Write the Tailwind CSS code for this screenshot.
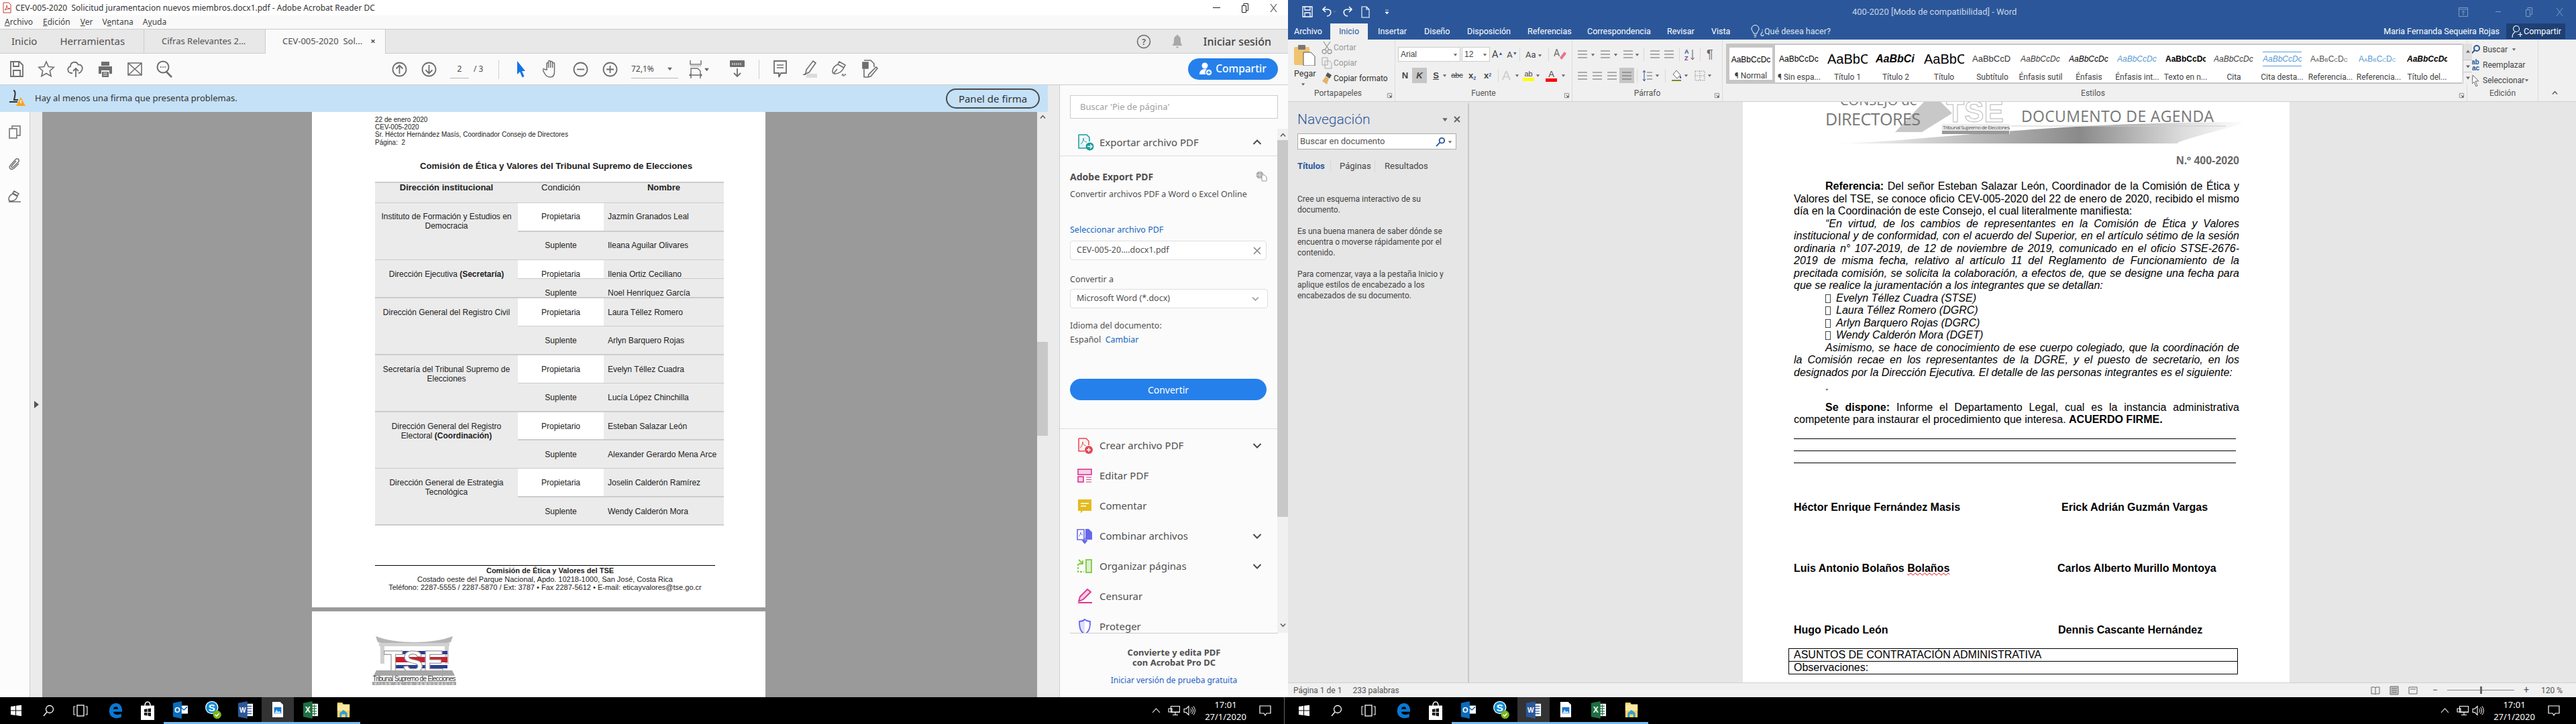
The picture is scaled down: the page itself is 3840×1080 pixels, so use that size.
<!DOCTYPE html>
<html lang="es">
<head>
<meta charset="UTF-8" />
<title>Acrobat y Word</title>
<script src="https://cdn.jsdelivr.net/npm/@tailwindcss/browser@4"></script>
</head>
<body class="w-[3840px] h-[1080px] overflow-hidden flex flex-col bg-black text-[#4b4b4b] font-['Noto_Sans',sans-serif]">

<!-- shared icons -->
<svg class="hidden">
  <symbol id="caret" viewBox="0 0 8 8"><path d="M1 2.5h6L4 6.5z" fill="#666"/></symbol>
  <symbol id="launch" viewBox="0 0 10 10"><path d="M1.5 1.5h7v7M1.5 1.5v7h7" fill="none" stroke="#888"/><path d="M4 4l3.5 3.5M7.5 5v2.5H5" stroke="#444" fill="none"/></symbol>
  <symbol id="chev-down" viewBox="0 0 14 10"><path d="M1.5 2l5.5 5.5L12.5 2" fill="none" stroke="#4b4b4b" stroke-width="2"/></symbol>
  <symbol id="win" viewBox="0 0 18 18"><path d="M1 3l7-1v6.500H1zM9 1.800L17 .8v7.700H9zM1 9.500h7V16l-7-1zM9 9.500h8v7.700l-8-1.100z" fill="#fff"/></symbol>
  <symbol id="find" viewBox="0 0 18 18"><circle cx="11" cy="7" r="5.500" fill="none" stroke="#fff" stroke-width="1.300"/><path d="M7 11l-5 6" stroke="#fff" stroke-width="1.300"/></symbol>
  <symbol id="taskview" viewBox="0 0 22 20"><rect x="6" y="2" width="10" height="16" fill="none" stroke="#fff" stroke-width="1.300"/><path d="M3.500 4H1v12h2.500M18.500 4H21v12h-2.500" fill="none" stroke="#fff" stroke-width="1.100"/></symbol>
  <symbol id="edge" viewBox="0 0 24 26"><path d="M2 14C2 6 7 1 13 1c6 0 10 5 10 12v2H8.500c.5 5 7 6 13 3v6c-8 3-19 1-19.500-10zM8.500 10.500h8c0-5-7-5-8 0z" fill="#0a78d4"/></symbol>
  <symbol id="store" viewBox="0 0 22 30"><path d="M7 8c0-8 8-8 8 0" fill="none" stroke="#fff" stroke-width="1.500"/><path d="M1 7.500h20V29H1z" fill="#fff"/><path d="M6 13l4.500-.7V17H6zM11.500 12.200l4.500-.7V17h-4.500zM6 18h4.500v4.500L6 22zM11.500 18H16v5.500l-4.500-.7z" fill="#111"/></symbol>
  <symbol id="outlook" viewBox="0 0 26 28"><path d="M12 7h13v13H12z" fill="#fff"/><path d="M13 9l5.500 5 5.500-5" fill="none" stroke="#0a6cbd" stroke-width="1.500"/><path d="M1 3l14-3v28L1 25z" fill="#0a6cbd"/><text x="8" y="18" text-anchor="middle" font-family="Liberation Sans" font-weight="700" font-size="12" fill="#fff">O</text></symbol>
  <symbol id="skype" viewBox="0 0 30 34"><circle cx="13" cy="13" r="11" fill="#fff"/><circle cx="13" cy="13" r="9.500" fill="#0a8fd8"/><text x="13" y="19" text-anchor="middle" font-family="Liberation Sans" font-weight="700" font-size="17" fill="#fff">S</text><circle cx="22" cy="25" r="7" fill="#7cb518"/><path d="M18.500 25l2.500 2.500 4-4.500" stroke="#fff" stroke-width="1.500" fill="none"/></symbol>
  <symbol id="word" viewBox="0 0 26 28"><rect x="12" y="4" width="13" height="20" fill="#fff"/><path d="M15 8h8M15 12h8M15 16h8M15 20h8" stroke="#2b579a" stroke-width="1.500"/><path d="M1 3l15-3v28L1 25z" fill="#2b579a"/><text x="8.500" y="18" text-anchor="middle" font-family="Liberation Sans" font-weight="700" font-size="11" fill="#fff">W</text></symbol>
  <symbol id="photo" viewBox="0 0 20 28"><path d="M1 1h13l5 5v21H1z" fill="#fff"/><path d="M4 10h12v11H4z" fill="#1978d4"/><path d="M4 21l4-7 3 4 2-2 3 5z" fill="#bfe0fa"/></symbol>
  <symbol id="excel" viewBox="0 0 26 28"><rect x="12" y="4" width="13" height="20" fill="#fff"/><path d="M15 8h8M15 12h8M15 16h8M15 20h8M19 5v18" stroke="#1d6f42" stroke-width="1.300"/><path d="M1 3l15-3v28L1 25z" fill="#1d6f42"/><text x="8.500" y="18.500" text-anchor="middle" font-family="Liberation Sans" font-weight="700" font-size="13" fill="#fff">X</text></symbol>
  <symbol id="folder" viewBox="0 0 24 28"><path d="M2 2h8l2 3h10v21H2z" fill="#f6d365"/><path d="M2 5h20v10H2z" fill="#fdeaa0"/><path d="M6 26v-7l6-5 6 5v7h-3v-5H9v5z" fill="#2d9cdb"/></symbol>
  <symbol id="list" viewBox="0 0 16 14"><path d="M1 2h14M1 7h14M1 12h14" stroke="#666" stroke-width="1.200"/></symbol>
  <symbol id="netw" viewBox="0 0 18 16"><path d="M4.500 1.500h13v9h-13zM1 5h5v5H1zM3 10h14M11 11v3M7 14.500h8" fill="#000" stroke="#fff" stroke-width="1.100"/></symbol>
  <symbol id="vol" viewBox="0 0 18 16"><path d="M1 5.500h3l4-4v13l-4-4H1z" fill="none" stroke="#fff" stroke-width="1.100"/><path d="M10.500 5a4 4 0 010 6M12.500 3a7 7 0 010 10M15 1.500a10 10 0 010 13" fill="none" stroke="#fff"/></symbol>
  <symbol id="notif" viewBox="0 0 18 16"><path d="M1 1h16v11H11l-2 3-2-3H1z" fill="none" stroke="#fff" stroke-width="1.200"/></symbol>
</svg>

<div class="flex h-[1040px]">

  <!-- ADOBE ACROBAT -->
  <div class="w-[1920px] h-[1040px] flex flex-col bg-white overflow-hidden">
    <div class="h-[23px] flex items-center bg-white text-[#333]">
      <svg class="ml-[4px] w-[13px] h-[17px]" viewBox="0 0 13 17"><path d="M1 1h8l3 3v12H1z" fill="#fff" stroke="#c8372d"/><path d="M3 12c2-1 3-4 3-7 0 3 2 5 5 5-3 0-6 1-8 2z" fill="none" stroke="#c8372d"/></svg>
      <span class="ml-[6px] text-[12px] whitespace-pre">CEV-005-2020  Solicitud juramentacion nuevos miembros.docx1.pdf - Adobe Acrobat Reader DC</span>
      <div class="ml-auto flex items-center mr-[16px] gap-[32px]">
        <span class="w-[11px] h-px bg-[#222]"></span>
        <svg class="w-[10px] h-[14px]" viewBox="0 0 10 14"><path d="M.5 3.500h6v10h-6zM3 3.500V.5h6.500v10H7" fill="none" stroke="#222"/></svg>
        <svg class="w-[11px] h-[14px]" viewBox="0 0 11 14"><path d="M1 1l9 12M10 1L1 13" stroke="#222"/></svg>
      </div>
    </div>
    <div class="h-[21px] flex items-center bg-[#f9f9f9] border-b border-[#cccccc] text-[12px] text-[#444]">
      <span class="ml-[7px]"><u>A</u>rchivo</span><span class="ml-[15px]"><u>E</u>dición</span><span class="ml-[15px]"><u>V</u>er</span><span class="ml-[14px]">V<u>e</u>ntana</span><span class="ml-[14px]">A<u>y</u>uda</span>
    </div>
    <div class="h-[36px] flex text-[15px] text-[#505050]">
      <div class="w-[215px] flex items-center pl-[17px] bg-[#e8e8e8] border-b border-r border-[#cccccc]">Inicio<span class="ml-[34px]">Herramientas</span></div>
      <div class="w-[180px] flex items-center pl-[26px] bg-[#e8e8e8] border-b border-[#cccccc] text-[13px]">Cifras Relevantes 2...</div>
      <div class="w-[180px] flex items-center pl-[25px] bg-[#fafafa] border-x border-[#cccccc] text-[13px] whitespace-pre">CEV-005-2020  Sol...<span class="ml-[12px] text-[13px] font-bold">×</span></div>
      <div class="flex-1 flex items-center justify-end pr-[25px] bg-[#e8e8e8] border-b border-[#cccccc]">
        <svg class="w-[22px] h-[22px] mr-[30px]" viewBox="0 0 22 22"><circle cx="11" cy="11" r="9.500" fill="none" stroke="#6e6e6e" stroke-width="1.600"/><text x="11" y="15.500" text-anchor="middle" font-size="12" font-weight="700" fill="#6e6e6e">?</text></svg>
        <svg class="w-[18px] h-[22px] mr-[30px]" viewBox="0 0 18 22"><path d="M9 1c1 0 1.500.7 1.500 1.500C14 3.500 14 7 14 11c0 3 1.500 4.500 2.500 6h-15C2.500 15.500 4 14 4 11c0-4 0-7.500 3.500-8.500C7.500 1.700 8 1 9 1zM7 18.500h4c0 2.500-4 2.500-4 0z" fill="#a8a8a8"/></svg>
        <span class="font-medium text-[16px] text-[#444]">Iniciar sesión</span>
      </div>
    </div>
    <div class="h-[47px] flex items-center bg-[#fafafa] border-b border-[#cccccc] pl-[3px]">
      <div class="w-[44px] flex justify-center"><svg class="w-[24px] h-[26px]" viewBox="0 0 24 26" fill="none" stroke="#6e6e6e" stroke-width="1.800"><path d="M3 2h13l5 5v17H3z"/><path d="M7 2v7h8V2M7 24v-9h10v9"/></svg></div>
      <div class="w-[44px] flex justify-center"><svg class="w-[26px] h-[26px]" viewBox="0 0 26 26"><path d="M13 2l3.300 7.500 8 .8-6 5.400 1.800 8L13 19.500 5.900 23.700l1.800-8-6-5.400 8-.8z" fill="none" stroke="#6e6e6e" stroke-width="1.600"/></svg></div>
      <div class="w-[44px] flex justify-center"><svg class="w-[26px] h-[26px]" viewBox="0 0 26 26" fill="none" stroke="#6e6e6e" stroke-width="1.800"><path d="M8 19H6a5 5 0 01-1-9.800C5 2 14 .5 16.500 6.500c5-.5 7 3.500 6 7-1 3-3 5.500-5.500 5.500"/><path d="M13 25V12M9 16l4-4 4 4"/></svg></div>
      <div class="w-[44px] flex justify-center"><svg class="w-[24px] h-[26px]" viewBox="0 0 24 26"><path d="M6 2h12v6H6zM2 9h20v11h-4v-5H6v5H2zM7 17h10v8H7z" fill="#6e6e6e"/><path d="M9 19h6M9 22h6" stroke="#fff"/></svg></div>
      <div class="w-[44px] flex justify-center"><svg class="w-[24px] h-[24px]" viewBox="0 0 24 24" fill="none" stroke="#6e6e6e" stroke-width="1.600"><path d="M2 3h20v18H2zM2 3l20 18M22 3L2 21"/></svg></div>
      <div class="w-[44px] flex justify-center"><svg class="w-[26px] h-[26px]" viewBox="0 0 26 26" fill="none" stroke="#6e6e6e" stroke-width="2"><circle cx="11" cy="10" r="8.500"/><path d="M16 17l8 8" stroke-width="2.600"/><path d="M7 10h1.500M10.300 10h1.500M13.500 10H15"/></svg></div>

      <div class="ml-[306px] w-[44px] flex justify-center"><svg class="w-[23px] h-[23px]" viewBox="0 0 23 23" fill="none" stroke="#6e6e6e" stroke-width="1.800"><circle cx="11.500" cy="11.500" r="10"/><path d="M11.500 18V5.500M6.500 10.500l5-5 5 5"/></svg></div>
      <div class="w-[44px] flex justify-center"><svg class="w-[23px] h-[23px]" viewBox="0 0 23 23" fill="none" stroke="#6e6e6e" stroke-width="1.800"><circle cx="11.500" cy="11.500" r="10"/><path d="M11.500 5v12.500M6.500 12.500l5 5 5-5"/></svg></div>
      <div class="ml-[10px] w-[28px] h-[26px] mt-[2px] border-b border-[#b8b8b8] text-center text-[12px] leading-[24px]">2</div>
      <div class="ml-[7px] w-[37px] text-[12px]">/ 3</div>
      <div class="w-px h-[29px] bg-[#cfcfcf]"></div>
      <div class="ml-[11px] w-[44px] flex justify-center"><svg class="w-[16px] h-[26px]" viewBox="0 0 16 26"><path d="M2 1l12 15H9l3.500 8-3 1.500L6 17l-4 4z" fill="#1473e6"/></svg></div>
      <div class="w-[44px] flex justify-center"><svg class="w-[24px] h-[28px]" viewBox="0 0 24 28" fill="none" stroke="#6e6e6e" stroke-width="1.500"><path d="M6 15V6c0-2 2.500-2 2.500 0v6-9c0-2 3-2 3 0v9-8c0-2 3-2 3 0v8-6c0-2 3-2 3 0v12c0 5-2 8-6 8-5 0-7-2-9-6l-2-4c-1-2 1-3 2.500-1.500z"/></svg></div>
      <div class="w-[44px] flex justify-center"><svg class="w-[23px] h-[23px]" viewBox="0 0 23 23" fill="none" stroke="#6e6e6e" stroke-width="1.800"><circle cx="11.500" cy="11.500" r="10"/><path d="M6 11.500h11"/></svg></div>
      <div class="w-[44px] flex justify-center"><svg class="w-[23px] h-[23px]" viewBox="0 0 23 23" fill="none" stroke="#6e6e6e" stroke-width="1.800"><circle cx="11.500" cy="11.500" r="10"/><path d="M6 11.500h11M11.500 6v11"/></svg></div>
      <div class="ml-[10px] w-[70px] h-[26px] mt-[2px] flex items-center justify-between border-b border-[#b8b8b8] text-[12px] pr-[8px] pb-[2px]">72,1%<svg class="w-[9px] h-[9px]"><use href="#caret"/></svg></div>
      <div class="ml-[9px] w-[44px] flex items-center justify-center"><svg class="w-[22px] h-[28px]" viewBox="0 0 22 28" fill="none" stroke="#6e6e6e" stroke-width="1.400"><path d="M2 1v6h16V1"/><path d="M2 9h16" stroke="#cfcfcf" stroke-width="3"/><path d="M3 28V13h10l4 4v11M1 23h18M4 23l-2 0M3 25l-2-2 2-2M17 25l2-2-2-2"/></svg><svg class="w-[9px] h-[9px]"><use href="#caret"/></svg></div>
      <div class="ml-[13px] w-[44px] flex justify-center"><svg class="w-[22px] h-[26px]" viewBox="0 0 22 26"><rect x="0" y="0" width="22" height="10" rx="1" fill="#6e6e6e"/><path d="M4 4v3M7 4v3M10 4v3M13 4v3M16 4v3" stroke="#fff"/><path d="M11 12v12M6 19l5 5 5-5" fill="none" stroke="#6e6e6e" stroke-width="1.800"/></svg></div>
      <div class="ml-[10px] w-px h-[29px] bg-[#cfcfcf]"></div>
      <div class="ml-[9px] w-[44px] flex justify-center"><svg class="w-[20px] h-[26px]" viewBox="0 0 20 26"><path d="M1 1h18v18h-8l-3 6v-6H1z" fill="none" stroke="#6e6e6e" stroke-width="1.800"/><path d="M5 7h10M5 11h10" stroke="#6e6e6e" stroke-width="1.400"/></svg></div>
      <div class="w-[44px] flex justify-center"><svg class="w-[24px] h-[28px]" viewBox="0 0 24 28"><path d="M17 2l4 3-10 14-5 2 1-6z" fill="none" stroke="#6e6e6e" stroke-width="1.600"/><path d="M4 21l3-1-1 3H1z" fill="#6e6e6e"/><path d="M7 21h16v6H7z" fill="#dcdcdc"/></svg></div>
      <div class="ml-px w-[44px] flex justify-center"><svg class="w-[26px] h-[26px]" viewBox="0 0 26 26" fill="none" stroke="#6e6e6e" stroke-width="1.600"><path d="M10 6l9 5c-3 6-7 9-13 9-2 0-4-1-4-3 0-5 3-9 8-11zM12 2l9 5-2 4-9-5zM4 19l5-6"/><path d="M16 23c1-3 2-3 2-1s1 2 2 0 1-2 2 0" stroke-width="1.200"/></svg></div>
      <div class="ml-px w-[44px] flex justify-center"><svg class="w-[24px] h-[28px]" viewBox="0 0 24 28" fill="none" stroke="#6e6e6e" stroke-width="1.600"><path d="M3 1h10l5 5v5M8 26h-5V14"/><path d="M1 4h8v9H1z" fill="#6e6e6e"/><path d="M21 11l2 2-10 12-4 1 1-4z"/></svg></div>
      <div class="ml-auto mr-[15px] w-[134px] h-[32px] flex items-center justify-center rounded-full bg-[#2680eb] text-white text-[15.500px] font-medium">
        <svg class="w-[20px] h-[22px] mr-[4px]" viewBox="0 0 20 22"><circle cx="8" cy="6" r="4.500" fill="#fff"/><path d="M0 19c0-5 3-8 8-8s8 3 8 8z" fill="#fff"/><circle cx="14" cy="16" r="5.500" fill="#2680eb"/><circle cx="14" cy="16" r="4.300" fill="#fff"/><path d="M14 13.500v5M11.500 16h5" stroke="#2680eb" stroke-width="1.300"/></svg>Compartir
      </div>
    </div>

    <div class="flex-1 flex min-h-0">
      <div class="w-[1562px] flex flex-col">
        <div class="h-[40px] flex items-center bg-[#c5e1f7] pl-[14px] text-[#333]">
          <svg class="w-[24px] h-[26px]" viewBox="0 0 24 26"><path d="M6 1c3 0 3 5 2 9l-1 5h6" fill="none" stroke="#333" stroke-width="2"/><path d="M0 18h12" stroke="#333" stroke-width="2"/><path d="M17 11l7 13H10z" fill="#f5a623"/><path d="M17 15v5" stroke="#fff" stroke-width="1.500"/></svg>
          <span class="ml-[14px] text-[13px]">Hay al menos una firma que presenta problemas.</span>
          <div class="ml-auto mr-[12px] w-[140px] h-[30px] flex items-center justify-center rounded-full border-2 border-[#4b4b4b] text-[15px]">Panel de firma</div>
        </div>
        <div class="flex-1 flex min-h-0">
          <div class="w-[45px] bg-[#fcfcfc] border-r border-[#cfcfcf] flex flex-col items-center pt-[20px] gap-[28px]">
            <svg class="w-[20px] h-[20px]" viewBox="0 0 20 20" fill="none" stroke="#6e6e6e" stroke-width="1.500"><path d="M2 5h11v14H2zM6 5V1h12v14h-5"/></svg>
            <svg class="w-[18px] h-[20px]" viewBox="0 0 18 20" fill="none" stroke="#6e6e6e" stroke-width="1.500"><path d="M15 9l-7 7c-5 4-9-1-5-5l7-8c4-3 7 1 4 4l-7 7c-2 2-4 0-2-2l6-7"/></svg>
            <svg class="w-[20px] h-[20px]" viewBox="0 0 20 20" fill="none" stroke="#6e6e6e" stroke-width="1.500"><path d="M7 6l7 4c-2 5-5 7-10 7-2 0-3-1-3-3 0-3 2-6 6-8zM9 2l7 4-2 3-7-4zM1 18h18"/></svg>
          </div>
          <div class="w-[18px] bg-[#ebebeb] flex items-center justify-center">
            <svg class="w-[7px] h-[11px]" viewBox="0 0 7 11"><path d="M0 0l7 5.500L0 11z" fill="#555"/></svg>
          </div>
          <div class="flex-1 bg-[#9a9a9a] pl-[402px] overflow-hidden">
            <!-- PDF pages -->
            <div class="w-[676px] h-[739px] bg-white pl-[94px] pt-[6px] font-['Liberation_Sans',sans-serif] text-[#222]">
              <div class="text-[10px] leading-[11px]">22 de enero 2020<br />CEV-005-2020<br />Sr. Héctor Hernández Masís, Coordinador Consejo de Directores<br /><span class="leading-[13px]">Página:&nbsp; 2</span></div>
              <div class="mt-[21px] ml-[67px] text-[13.200px] font-bold leading-[16px] whitespace-nowrap">Comisión de Ética y Valores del Tribunal Supremo de Elecciones</div>
              <div class="mt-[15px] w-[520px] text-[12px] leading-[14px] bg-[#ebebeb]">
                <div class="flex h-[31px] border-t-2 border-[#cccccc] font-bold text-[13px]">
                  <div class="w-[213px] text-center">Dirección institucional</div>
                  <div class="w-[128px] text-center font-normal">Condición</div>
                  <div class="w-[179px] text-center">Nombre</div>
                </div>
                <div class="flex border-y border-[#cccccc]">
                  <div class="w-[213px] pt-[13px] px-[6px] text-center">Instituto de Formación y Estudios en Democracia</div>
                  <div class="flex-1">
                    <div class="flex h-[43px] border-b-2 border-[#cccccc]"><div class="w-[128px] bg-white pt-[13px] text-center">Propietaria</div><div class="pl-[6px] pt-[13px]">Jazmín Granados Leal</div></div>
                    <div class="flex h-[41px]"><div class="w-[128px] pt-[13px] text-center">Suplente</div><div class="pl-[6px] pt-[13px]">Ileana Aguilar Olivares</div></div>
                  </div>
                </div>
                <div class="flex border-b-2 border-[#cccccc]">
                  <div class="w-[213px] pt-[14px] text-center">Dirección Ejecutiva <b>(Secretaría)</b></div>
                  <div class="flex-1">
                    <div class="flex h-[28px] border-b border-[#cccccc]"><div class="w-[128px] bg-white pt-[14px] text-center">Propietaria</div><div class="pl-[6px] pt-[14px]">Ilenia Ortiz Ceciliano</div></div>
                    <div class="flex h-[27px]"><div class="w-[128px] pt-[14px] text-center">Suplente</div><div class="pl-[6px] pt-[14px]">Noel Henríquez García</div></div>
                  </div>
                </div>
                <div class="flex border-b-2 border-[#cccccc]">
                  <div class="w-[213px] pt-[14px] text-center">Dirección General del Registro Civil</div>
                  <div class="flex-1">
                    <div class="flex h-[42px] border-b border-[#cccccc]"><div class="w-[128px] bg-white pt-[14px] text-center">Propietaria</div><div class="pl-[6px] pt-[14px]">Laura Téllez Romero</div></div>
                    <div class="flex h-[41px]"><div class="w-[128px] pt-[14px] text-center">Suplente</div><div class="pl-[6px] pt-[14px]">Arlyn Barquero Rojas</div></div>
                  </div>
                </div>
                <div class="flex border-b-2 border-[#cccccc]">
                  <div class="w-[213px] pt-[14px] px-[6px] text-center">Secretaría del Tribunal Supremo de Elecciones</div>
                  <div class="flex-1">
                    <div class="flex h-[42px] border-b border-[#cccccc]"><div class="w-[128px] bg-white pt-[14px] text-center">Propietaria</div><div class="pl-[6px] pt-[14px]">Evelyn Téllez Cuadra</div></div>
                    <div class="flex h-[41px]"><div class="w-[128px] pt-[14px] text-center">Suplente</div><div class="pl-[6px] pt-[14px]">Lucía López Chinchilla</div></div>
                  </div>
                </div>
                <div class="flex border-b border-[#cccccc]">
                  <div class="w-[213px] pt-[14px] px-[20px] text-center">Dirección General del Registro Electoral <b>(Coordinación)</b></div>
                  <div class="flex-1">
                    <div class="flex h-[42px] border-b-2 border-[#cccccc]"><div class="w-[128px] bg-white pt-[14px] text-center">Propietario</div><div class="pl-[6px] pt-[14px]">Esteban Salazar León</div></div>
                    <div class="flex h-[41px]"><div class="w-[128px] pt-[14px] text-center">Suplente</div><div class="pl-[6px] pt-[14px]">Alexander Gerardo Mena Arce</div></div>
                  </div>
                </div>
                <div class="flex border-b-2 border-[#cccccc]">
                  <div class="w-[213px] pt-[14px] px-[20px] text-center">Dirección General de Estrategia Tecnológica</div>
                  <div class="flex-1">
                    <div class="flex h-[43px] border-b-2 border-[#cccccc]"><div class="w-[128px] bg-white pt-[14px] text-center">Propietaria</div><div class="pl-[6px] pt-[14px]">Joselin Calderón Ramírez</div></div>
                    <div class="flex h-[40px]"><div class="w-[128px] pt-[14px] text-center">Suplente</div><div class="pl-[6px] pt-[14px]">Wendy Calderón Mora</div></div>
                  </div>
                </div>
              </div>
              <div class="mt-[59px] w-[507px] border-t border-black text-center text-[11px] leading-[12.500px] pt-[1px]">
                <div class="font-bold pl-[15px]">Comisión de Ética y Valores del TSE</div>
                <div>Costado oeste del Parque Nacional, Apdo. 10218-1000, San José, Costa Rica</div>
                <div>Teléfono: 2287-5555 / 2287-5870 / Ext: 3787 • Fax 2287-5612 • E-mail: eticayvalores@tse.go.cr</div>
              </div>
            </div>
            <div class="mt-[6px] w-[676px] h-[128px] bg-white pl-[90px] pt-[36px]">
              <svg class="w-[125px] h-[74px]" viewBox="0 0 125 74">
                <path d="M5 1c30 12 85 12 115 0l-3 9c-30 6-80 6-109 0z" fill="#b5b5b5"/>
                <path d="M10 11h105v5H10zM12 16h6v26h-6zM108 16h6v26h-6z" fill="#d0d0d0"/>
                <path d="M28 23h84v5H28z" fill="#2c3e8f"/><path d="M28 32h84v8H28z" fill="#c8202f"/><path d="M28 44h84v5H28z" fill="#2c3e8f"/>
                <text x="62" y="55" text-anchor="middle" font-family="Liberation Sans" font-weight="700" font-size="46" fill="#fff" stroke="#8c8c8c" stroke-width="1">TSE</text>
                <path d="M6 52h113l4 8H2z" fill="#a6a6a6"/>
                <text x="62.500" y="68" text-anchor="middle" font-family="Liberation Sans" font-size="10" fill="#333" textLength="124">Tribunal Supremo de Elecciones</text>
                <rect x="0" y="69" width="125" height="5" fill="#a6a6a6"/>
                <text x="62.500" y="73.500" text-anchor="middle" font-family="Liberation Sans" font-size="4.500" fill="#fff" textLength="118">PILAR DE LA DEMOCRACIA</text>
              </svg>
            </div>
          </div>
          <div class="w-[16px] bg-[#ebebeb] relative flex flex-col items-center">
            <svg class="mt-[4px] w-[9px] h-[7px]" viewBox="0 0 9 7"><path d="M1 5.500l3.500-4 3.500 4" fill="none" stroke="#555" stroke-width="1.400"/></svg>
            <div class="mt-[332px] w-full h-[140px] bg-[#c8c8c8]"></div>
          </div>
        </div>
      </div>
      <div class="w-[18px] bg-[#ebebeb] border-r border-[#cfcfcf]"></div>

      <!-- tools panel -->
      <div class="w-[340px] bg-[#fbfbfb] flex flex-col text-[#505050]">
        <div class="h-[65px] pl-[15px] pt-[15px]">
          <div class="w-[310px] h-[35px] bg-white border border-[#cccccc] flex items-center pl-[14px] text-[13px] text-[#a0a0a0]">Buscar 'Pie de página'</div>
        </div>
        <div class="h-[752px] flex overflow-hidden">
          <div class="w-[324px]">
            <div class="h-[41px] border-b border-[#dcdcdc] flex items-center pl-[27px] pr-[23px]">
              <svg class="w-[24px] h-[25px]" viewBox="0 0 24 25"><path d="M1 1h12l4 4v6M12 21H1V1" fill="#e6f4f4" stroke="#1b9a9a" stroke-width="1.500"/><path d="M4 15c3-2 4-6 4-9 0 3 2 6 5 6" fill="none" stroke="#1b9a9a"/><circle cx="17.500" cy="18.500" r="6" fill="#1b9a9a"/><path d="M14 18.500h7M18 15.500l3 3-3 3" fill="none" stroke="#fff" stroke-width="1.300"/></svg>
              <span class="ml-[8px] text-[15px]">Exportar archivo PDF</span>
              <svg class="ml-auto w-[14px] h-[10px] rotate-180"><use href="#chev-down"/></svg>
            </div>
            <div class="px-[15px]">
              <div class="mt-[20px] flex items-center justify-between h-[20px] pr-[0px] text-[14px] font-bold"><span>Adobe Export PDF</span>
                <svg class="w-[17px] h-[16px]" viewBox="0 0 17 16"><circle cx="6" cy="6" r="5.500" fill="#aaa"/><path d="M0 6h12M6 0v12" stroke="#fff" stroke-width=".7"/><path d="M9 6h4l3 3v6H9z" fill="#fff" stroke="#999"/></svg></div>
              <div class="mt-[8px] h-[18px] leading-[18px] text-[12.500px]">Convertir archivos PDF a Word o Excel Online</div>
              <div class="mt-[35px] h-[18px] leading-[18px] text-[12.500px] text-[#1665c0]">Seleccionar archivo PDF</div>
              <div class="mt-[7px] w-[293px] h-[29px] rounded-[4px] border border-[#dedede] bg-white flex items-center pl-[9px] pr-[7px] text-[12.500px]">CEV-005-20....docx1.pdf
                <svg class="ml-auto w-[12px] h-[12px]" viewBox="0 0 12 12"><path d="M1 1l10 10M11 1L1 11" stroke="#8a8a8a" stroke-width="1.700"/></svg></div>
              <div class="mt-[20px] h-[18px] leading-[18px] text-[12.500px]">Convertir a</div>
              <div class="mt-[5px] w-[295px] h-[29px] rounded-[4px] border border-[#dedede] bg-white flex items-center pl-[9px] pr-[12px] text-[12.500px]">Microsoft Word (*.docx)
                <svg class="ml-auto w-[11px] h-[8px]" viewBox="0 0 14 10"><path d="M1.500 2l5.500 5.500L12.500 2" fill="none" stroke="#999" stroke-width="2"/></svg></div>
              <div class="mt-[17px] h-[18px] leading-[18px] text-[12.500px]">Idioma del documento:</div>
              <div class="mt-[3px] h-[18px] leading-[18px] text-[12.500px]">Español&nbsp; <span class="text-[#1665c0]">Cambiar</span></div>
              <div class="mt-[49px] w-[293px] h-[32px] rounded-full bg-[#2680eb] text-white text-[14px] flex items-center justify-center">Convertir</div>
            </div>
            <div class="mt-[42px] border-t border-[#dcdcdc]"></div>
            <div class="h-[45px] mt-[2px] flex items-center pl-[25px] pr-[23px] text-[15px]">
              <svg class="w-[24px] h-[24px]" viewBox="0 0 24 24"><path d="M3 1h11l4 4v6M12 20H3V1" fill="#fdeef0" stroke="#e34850" stroke-width="1.500"/><path d="M5 15c3-2 4-6 4-9 0 3 2 6 5 6" fill="none" stroke="#e34850"/><circle cx="18" cy="18" r="6" fill="#e34850"/><path d="M18 15v6M15 18h6" stroke="#fff" stroke-width="1.500"/></svg>
              <span class="ml-[10px]">Crear archivo PDF</span><svg class="ml-auto w-[14px] h-[10px]"><use href="#chev-down"/></svg>
            </div>
            <div class="h-[45px] flex items-center pl-[25px] text-[15px]">
              <svg class="w-[24px] h-[24px]" viewBox="0 0 24 24" stroke="#d83790" stroke-width="1.600"><rect x="2" y="2" width="20" height="8" fill="#f7cfe5"/><rect x="2" y="13" width="8" height="8" fill="#f7cfe5"/><path d="M14 14h8M14 17.500h8M14 21h8" stroke-width="1"/></svg>
              <span class="ml-[10px]">Editar PDF</span>
            </div>
            <div class="h-[45px] flex items-center pl-[25px] text-[15px]">
              <svg class="w-[24px] h-[24px]" viewBox="0 0 24 24"><path d="M2 2h20v17H9l-3 4v-4H2z" fill="#e3bb20"/><path d="M6 8h12M6 12h8" stroke="#fff" stroke-width="1.500"/></svg>
              <span class="ml-[10px]">Comentar</span>
            </div>
            <div class="h-[45px] flex items-center pl-[25px] pr-[23px] text-[15px]">
              <svg class="w-[24px] h-[24px]" viewBox="0 0 24 24"><path d="M1 2h10v15H1z" fill="#fff" stroke="#6767ec" stroke-width="1.600"/><path d="M3 12c2-1 3-4 3-6 0 2 1 4 3 4" fill="none" stroke="#6767ec"/><path d="M13 1h5l5 5v11H13z" fill="#6767ec"/><path d="M12 14v6M8 18h8l-4 5z" fill="#6767ec" stroke="#6767ec"/></svg>
              <span class="ml-[10px]">Combinar archivos</span><svg class="ml-auto w-[14px] h-[10px]"><use href="#chev-down"/></svg>
            </div>
            <div class="h-[45px] flex items-center pl-[25px] pr-[23px] text-[15px]">
              <svg class="w-[24px] h-[24px]" viewBox="0 0 24 24"><rect x="14" y="2" width="8" height="19" fill="#dcf0d0" stroke="#7fc93f" stroke-width="1.800"/><path d="M2 8v12h9" fill="none" stroke="#7fc93f" stroke-width="1.800" stroke-dasharray="3 2"/><path d="M3 2l6 6M3 8h6V3" fill="none" stroke="#7fc93f" stroke-width="1.800"/></svg>
              <span class="ml-[10px]">Organizar páginas</span><svg class="ml-auto w-[14px] h-[10px]"><use href="#chev-down"/></svg>
            </div>
            <div class="h-[45px] flex items-center pl-[25px] text-[15px]">
              <svg class="w-[24px] h-[24px]" viewBox="0 0 24 24"><path d="M16 1l5 4-11 11-7 3 2-7z" fill="#f5cfe3" stroke="#d83790" stroke-width="1.800"/><path d="M1 22l3-2h19v2z" fill="#d83790"/></svg>
              <span class="ml-[10px]">Censurar</span>
            </div>
            <div class="h-[45px] flex items-center pl-[25px] text-[15px]">
              <svg class="w-[24px] h-[24px]" viewBox="0 0 24 24"><path d="M12 1c2 2 5 3 8 3 0 9-1 15-8 19C5 19 4 13 4 4c3 0 6-1 8-3z" fill="#dfe0fa" stroke="#6767ec" stroke-width="1.800"/><path d="M12 2v20c6-4 7-9 7-17-2 0-5-1-7-3z" fill="#fff"/></svg>
              <span class="ml-[10px]">Proteger</span>
            </div>
          </div>
          <div class="w-[16px] bg-[#f0f0f0] flex flex-col items-center">
            <svg class="mt-[6px] w-[9px] h-[7px]" viewBox="0 0 9 7"><path d="M1 5.500l3.500-4 3.500 4" fill="none" stroke="#555" stroke-width="1.400"/></svg>
            <div class="mt-[4px] w-full h-[562px] bg-[#c8c8c8]"></div>
            <svg class="mt-[158px] w-[9px] h-[7px] rotate-180" viewBox="0 0 9 7"><path d="M1 5.500l3.500-4 3.500 4" fill="none" stroke="#555" stroke-width="1.400"/></svg>
          </div>
        </div>
        <div class="ml-[15px] w-[310px] border-t border-[#cccccc] text-center pt-[21px]">
          <div class="text-[13px] font-bold leading-[15px]">Convierte y edita PDF<br />con Acrobat Pro DC</div>
          <div class="mt-[10px] text-[12px] text-[#1f5fc4]">Iniciar versión de prueba gratuita</div>
        </div>
      </div>
    </div>
  </div>

  <!-- WORD -->
  <div class="w-[1920px] h-[1040px] flex flex-col bg-[#e6e6e6] overflow-hidden font-['Roboto',sans-serif]">
    <div class="h-[35px] bg-[#2b579a] flex items-center text-[#c9d4e6] text-[13px] relative">
      <svg class="ml-[21px] w-[16px] h-[17px]" viewBox="0 0 16 17" fill="none" stroke="#fff" stroke-width="1.300"><path d="M1 1h14v15H1zM4 1v5h8V1M4 16v-6h8v6"/></svg>
      <svg class="ml-[13px] w-[16px] h-[17px]" viewBox="0 0 16 17" fill="none" stroke="#fff" stroke-width="1.600"><path d="M6 1L2 5l4 4M2 5h7c7 0 6 10-1 10"/></svg>
      <svg class="w-[7px] h-[7px]"><use href="#caret"/></svg>
      <svg class="ml-[8px] w-[16px] h-[17px] -scale-x-100" viewBox="0 0 16 17" fill="none" stroke="#fff" stroke-width="1.600"><path d="M6 1L2 5l4 4M2 5h7c7 0 6 10-1 10"/></svg>
      <svg class="ml-[12px] w-[13px] h-[18px]" viewBox="0 0 13 18" fill="none" stroke="#fff" stroke-width="1.100"><path d="M1 1h7l4 4v12H1zM8 1v4h4"/></svg>
      <svg class="ml-[22px] w-[7px] h-[8px]" viewBox="0 0 7 8"><path d="M1 1h5M1 4l2.500 3L6 4z" fill="#fff" stroke="#fff" stroke-width=".7"/></svg>
      <span class="ml-[690px]">400-2020 [Modo de compatibilidad] - Word</span>
      <div class="ml-auto flex items-center">
        <svg class="w-[14px] h-[14px]" viewBox="0 0 14 14" fill="none" stroke="#7f9ac2"><path d="M.5.5h13v13H.5zM1 3h12M7 12V5M4.500 7.500L7 5l2.500 2.500"/></svg>
        <span class="ml-[41px] w-[8px] h-px bg-[#7f9ac2]"></span>
        <svg class="ml-[37px] w-[10px] h-[14px]" viewBox="0 0 10 14" fill="none" stroke="#7f9ac2"><path d="M.5 3.500h6v10h-6zM3 3.500V.5h6.500v10H7"/></svg>
        <svg class="ml-[35px] mr-[19px] w-[11px] h-[14px]" viewBox="0 0 11 14"><path d="M1 1l9 12M10 1L1 13" stroke="#7f9ac2"/></svg>
      </div>
    </div>
    <div class="h-[24px] bg-[#2b579a] flex text-[12.500px] text-white leading-[24px] whitespace-nowrap">
      <span class="ml-[9px] w-[54px]">Archivo</span>
      <span class="w-[56px] bg-[#f0f0f0] text-[#2b579a] text-center">Inicio</span>
      <span class="ml-[15px] w-[69px]">Insertar</span>
      <span class="w-[64px]">Diseño</span>
      <span class="w-[90px]">Disposición</span>
      <span class="w-[89px]">Referencias</span>
      <span class="w-[119px]">Correspondencia</span>
      <span class="w-[66px]">Revisar</span>
      <span class="w-[59px]">Vista</span>
      <svg class="mt-[2px] w-[13px] h-[20px]" viewBox="0 0 13 20" fill="none" stroke="#fff"><path d="M4 13c0-3-3-4-3-7a5.500 5.500 0 0111 0c0 3-3 4-3 7zM4.500 15.500h4M5 18h3"/></svg>
      <span class="ml-[1px] text-[#dde4f0]">¿Qué desea hacer?</span>
      <span class="ml-auto">Maria Fernanda Sequeira Rojas</span>
      <div class="ml-[10px] mr-[16px] w-[88px] h-[23px] bg-[#1e4073] flex items-center pl-[8px]">
        <svg class="w-[16px] h-[20px]" viewBox="0 0 16 20" fill="none" stroke="#fff" stroke-width="1.100"><circle cx="7" cy="6" r="4.500"/><path d="M1 19c0-5 2-7 4-8M13 11v7M9.500 14.500h7"/></svg>
        <span class="ml-[2px]">Compartir</span>
      </div>
    </div>
    <!-- ribbon -->
    <div class="h-[93px] bg-[#f0f0f0] border-b border-[#d0d0d0] flex text-[12px] text-[#444] leading-none">
      <!-- Portapapeles -->
      <div class="w-[160px] border-r border-[#dcdcdc] flex flex-col relative">
        <div class="h-[74px] flex">
          <div class="w-[50px] pl-[9px] pt-[7px]">
            <svg class="w-[32px] h-[32px]" viewBox="0 0 32 32"><rect x="0" y="4" width="23" height="27" rx="2" fill="#f0c36e"/><rect x="6" y="1" width="11" height="7" rx="1" fill="#777"/><path d="M14 12h11l6 6v14H14z" fill="#fff" stroke="#555"/></svg>
            <div class="mt-[6px] text-[12.500px] text-[#333]">Pegar</div>
            <svg class="mt-[5px] ml-[10px] w-[7px] h-[7px]"><use href="#caret"/></svg>
          </div>
          <div class="flex flex-col pt-[4px] gap-[8px]">
            <div class="h-[15px] flex items-center text-[#999]"><svg class="w-[16px] h-[20px]" viewBox="0 0 16 20" fill="none" stroke="#999" stroke-width="1.300"><circle cx="4" cy="16" r="3"/><circle cx="12" cy="16" r="3"/><path d="M5 13L13 1M11 13L3 1"/></svg><span class="ml-[2px]">Cortar</span></div>
            <div class="h-[15px] flex items-center text-[#999]"><svg class="w-[16px] h-[18px]" viewBox="0 0 16 18" fill="none" stroke="#aaa"><path d="M1 1h8v11H1zM5 6h7l3 3v8H5z"/></svg><span class="ml-[2px]">Copiar</span></div>
            <div class="h-[15px] flex items-center text-[#333]"><svg class="w-[16px] h-[20px]" viewBox="0 0 16 20"><path d="M9 1l6 4-3 5-6-4z" fill="#555"/><path d="M6 7l5 3-3 9-7-5z" fill="#e3b36b"/></svg><span class="ml-[2px]">Copiar formato</span></div>
          </div>
        </div>
        <div class="flex-1 text-center pr-[10px] text-[#555]">Portapapeles</div>
        <svg class="absolute right-[3px] bottom-[4px] w-[9px] h-[9px]"><use href="#launch"/></svg>
      </div>
      <!-- Fuente -->
      <div class="w-[264px] border-r border-[#dcdcdc] flex flex-col relative">
        <div class="h-[74px] pt-[11px]">
          <div class="h-[22px] flex items-center">
            <div class="ml-[4px] w-[93px] h-[22px] bg-white border border-[#ccc] flex items-center pl-[3px] pr-[3px] font-['Liberation_Sans',sans-serif]">Arial<svg class="ml-auto w-[7px] h-[7px]"><use href="#caret"/></svg></div>
            <div class="ml-[2px] w-[42px] h-[22px] bg-white border border-[#ccc] flex items-center pl-[3px] pr-[3px] font-['Liberation_Sans',sans-serif]">12<svg class="ml-auto w-[7px] h-[7px]"><use href="#caret"/></svg></div>
            <div class="w-[22px] text-center text-[15px]">A<sup class="text-[7px] text-[#2b579a]">▲</sup></div>
            <div class="w-[22px] text-center text-[13px]">A<sup class="text-[7px] text-[#2b579a]">▼</sup></div>
            <div class="w-px h-[20px] bg-[#d8d8d8]"></div>
            <div class="ml-[8px] w-[28px] text-[13px]">Aa<svg class="inline w-[7px] h-[7px] ml-[2px]"><use href="#caret"/></svg></div>
            <div class="ml-[6px] w-px h-[20px] bg-[#d8d8d8]"></div>
            <svg class="ml-[7px] w-[20px] h-[22px]" viewBox="0 0 20 22"><text x="0" y="14" font-size="14" fill="#666">A</text><path d="M9 16l7-9 3 3-7 9z" fill="#e9748c"/></svg>
          </div>
          <div class="mt-[9px] h-[23px] flex items-center font-['Liberation_Sans',sans-serif] text-[13px]">
            <div class="ml-[4px] w-[21px] text-center font-bold">N</div>
            <div class="w-[22px] h-[23px] bg-[#c6c6c6] text-center leading-[23px] italic font-bold">K</div>
            <div class="w-[34px] flex justify-center items-center"><b class="underline mx-[5px]">S</b><svg class="w-[7px] h-[7px]"><use href="#caret"/></svg></div>
            <div class="w-[22px] text-center text-[11px] line-through">abc</div>
            <div class="w-[23px] text-center font-bold">x<sub class="text-[7px] text-[#2b579a]">2</sub></div>
            <div class="w-[23px] text-center font-bold">x<sup class="text-[7px] text-[#2b579a]">2</sup></div>
            <div class="w-px h-[20px] bg-[#d8d8d8] ml-[4px]"></div>
            <div class="ml-[3px] w-[33px] flex items-center"><span class="text-[#ccc] text-[19px] ml-[2px] mr-[6px]">A</span><svg class="w-[7px] h-[7px]"><use href="#caret"/></svg></div>
            <div class="w-[34px] flex items-center text-[11px]"><span class="border-b-[5px] border-[#ffff00] text-center w-[17px] mr-[2px]">ab</span><svg class="w-[7px] h-[7px]"><use href="#caret"/></svg></div>
            <div class="w-[32px] flex items-center"><span class="border-b-[5px] border-[#ff0000] text-center w-[17px] mr-[6px]">A</span><svg class="w-[7px] h-[7px]"><use href="#caret"/></svg></div>
          </div>
        </div>
        <div class="flex-1 text-center text-[#555]">Fuente</div>
        <svg class="absolute right-[3px] bottom-[4px] w-[9px] h-[9px]"><use href="#launch"/></svg>
      </div>
      <!-- Párrafo -->
      <div class="w-[224px] border-r border-[#dcdcdc] flex flex-col relative">
        <div class="h-[74px] pt-[11px]">
          <div class="h-[22px] flex items-center">
            <svg class="ml-[7px] w-[16px] h-[14px]"><use href="#list"/></svg><svg class="ml-[4px] w-[7px] h-[7px]"><use href="#caret"/></svg>
            <svg class="ml-[7px] w-[16px] h-[14px]"><use href="#list"/></svg><svg class="ml-[4px] w-[7px] h-[7px]"><use href="#caret"/></svg>
            <svg class="ml-[7px] w-[16px] h-[14px]"><use href="#list"/></svg><svg class="ml-[2px] w-[7px] h-[7px]"><use href="#caret"/></svg>
            <div class="ml-[6px] w-px h-[20px] bg-[#d8d8d8]"></div>
            <svg class="ml-[8px] w-[16px] h-[14px]"><use href="#list"/></svg>
            <svg class="ml-[5px] w-[16px] h-[14px]"><use href="#list"/></svg>
            <div class="ml-[7px] w-px h-[20px] bg-[#d8d8d8]"></div>
            <svg class="ml-[7px] w-[16px] h-[20px]" viewBox="0 0 16 20"><text x="0" y="9" font-size="9" font-weight="700" fill="#2b579a" font-family="Liberation Sans">A</text><text x="0" y="19" font-size="9" font-weight="700" fill="#7a3fa0" font-family="Liberation Sans">Z</text><path d="M12 3v15M9.500 15l2.500 3 2.500-3" fill="none" stroke="#555"/></svg>
            <div class="ml-[7px] w-px h-[20px] bg-[#d8d8d8]"></div>
            <span class="ml-[9px] text-[18px] font-['Liberation_Sans',sans-serif] text-[#666]">¶</span>
          </div>
          <div class="mt-[9px] h-[23px] flex items-center">
            <svg class="ml-[7px] w-[16px] h-[14px]"><use href="#list"/></svg>
            <svg class="ml-[6px] w-[16px] h-[14px]"><use href="#list"/></svg>
            <svg class="ml-[6px] w-[16px] h-[14px]"><use href="#list"/></svg>
            <div class="ml-[3px] w-[22px] h-[23px] bg-[#c6c6c6] flex items-center justify-center"><svg class="w-[16px] h-[14px]"><use href="#list"/></svg></div>
            <div class="ml-[4px] w-px h-[20px] bg-[#d8d8d8]"></div>
            <svg class="ml-[7px] w-[16px] h-[18px]" viewBox="0 0 16 18"><path d="M3 1v16M1 4l2-3 2 3M1 14l2 3 2-3" fill="none" stroke="#2b579a"/><path d="M7 4h8M7 9h8M7 14h8" stroke="#666"/></svg><svg class="ml-[3px] w-[7px] h-[7px]"><use href="#caret"/></svg>
            <div class="ml-[8px] w-px h-[20px] bg-[#d8d8d8]"></div>
            <svg class="ml-[8px] w-[16px] h-[20px]" viewBox="0 0 16 20"><path d="M8 2l6 7-5 5-6-6z" fill="#fff" stroke="#666"/><path d="M14 10c2 2 1 4 0 4s-2-2 0-4z" fill="#2b579a"/><path d="M1 17h14" stroke="#7a8c20" stroke-width="2"/></svg><svg class="ml-[3px] w-[7px] h-[7px]"><use href="#caret"/></svg>
            <svg class="ml-[9px] w-[16px] h-[16px]" viewBox="0 0 16 16" fill="none" stroke="#888" stroke-dasharray="1.500 1.500"><path d="M1 1h14v14H1zM8 1v14M1 8h14"/></svg><svg class="ml-[3px] w-[7px] h-[7px]"><use href="#caret"/></svg>
          </div>
        </div>
        <div class="flex-1 text-center text-[#555]">Párrafo</div>
        <svg class="absolute right-[3px] bottom-[4px] w-[9px] h-[9px]"><use href="#launch"/></svg>
      </div>
      <!-- Estilos -->
      <div class="w-[1110px] border-r border-[#dcdcdc] flex flex-col relative">
        <div class="h-[74px] pl-[5px] pt-[6px]">
          <div class="flex w-[1097px] h-[60px] border-y-2 border-l-2 border-[#c6c6c6] bg-white">
            <div class="w-[72px] h-full border-[4px] border-[#c6c6c6] -ml-[1px] -my-0 flex flex-col items-center overflow-hidden"><div class="h-[36px] w-[64px] overflow-hidden whitespace-nowrap text-[12px] leading-[36px] text-black font-['Liberation_Sans',sans-serif] text-center">AaBbCcDc</div><div class="text-[12px] mt-[2px] whitespace-nowrap">¶ Normal</div></div>
            <div class="w-[72px] flex flex-col items-center overflow-hidden"><div class="h-[42px] w-[60px] overflow-hidden whitespace-nowrap text-[12px] leading-[42px] text-black font-['Liberation_Sans',sans-serif]">AaBbCcDc</div><div class="whitespace-nowrap">¶ Sin espa...</div></div>
            <div class="w-[72px] flex flex-col items-center overflow-hidden"><div class="h-[42px] w-[60px] overflow-hidden whitespace-nowrap text-[20px] leading-[42px] text-black font-['Liberation_Sans',sans-serif]">AaBbC</div><div>Título 1</div></div>
            <div class="w-[72px] flex flex-col items-center overflow-hidden"><div class="h-[42px] w-[60px] overflow-hidden whitespace-nowrap text-[16px] leading-[42px] text-black font-['Liberation_Sans',sans-serif] italic font-bold">AaBbCi</div><div>Título 2</div></div>
            <div class="w-[72px] flex flex-col items-center overflow-hidden"><div class="h-[42px] w-[60px] overflow-hidden whitespace-nowrap text-[20px] leading-[42px] text-black font-['Liberation_Sans',sans-serif]">AaBbC</div><div>Título</div></div>
            <div class="w-[72px] flex flex-col items-center overflow-hidden"><div class="h-[42px] w-[60px] overflow-hidden whitespace-nowrap text-[13px] leading-[42px] text-[#333] font-['Liberation_Sans',sans-serif]">AaBbCcD</div><div>Subtítulo</div></div>
            <div class="w-[72px] flex flex-col items-center overflow-hidden"><div class="h-[42px] w-[60px] overflow-hidden whitespace-nowrap text-[12px] leading-[42px] text-[#404040] font-['Liberation_Sans',sans-serif] italic">AaBbCcDc</div><div class="whitespace-nowrap">Énfasis sutil</div></div>
            <div class="w-[72px] flex flex-col items-center overflow-hidden"><div class="h-[42px] w-[60px] overflow-hidden whitespace-nowrap text-[12px] leading-[42px] text-black font-['Liberation_Sans',sans-serif] italic">AaBbCcDc</div><div>Énfasis</div></div>
            <div class="w-[72px] flex flex-col items-center overflow-hidden"><div class="h-[42px] w-[60px] overflow-hidden whitespace-nowrap text-[12px] leading-[42px] text-[#5b9bd5] font-['Liberation_Sans',sans-serif] italic">AaBbCcDc</div><div class="whitespace-nowrap">Énfasis int...</div></div>
            <div class="w-[72px] flex flex-col items-center overflow-hidden"><div class="h-[42px] w-[60px] overflow-hidden whitespace-nowrap text-[12px] leading-[42px] text-black font-['Liberation_Sans',sans-serif] font-bold">AaBbCcDc</div><div class="whitespace-nowrap">Texto en n...</div></div>
            <div class="w-[72px] flex flex-col items-center overflow-hidden"><div class="h-[42px] w-[60px] overflow-hidden whitespace-nowrap text-[12px] leading-[42px] text-[#404040] font-['Liberation_Sans',sans-serif] italic">AaBbCcDc</div><div>Cita</div></div>
            <div class="w-[72px] flex flex-col items-center overflow-hidden"><div class="mt-[10px] h-[22px] mb-[10px] w-[58px] border-y border-[#5b9bd5] overflow-hidden whitespace-nowrap text-[12px] leading-[20px] text-[#5b9bd5] font-['Liberation_Sans',sans-serif] italic">AaBbCcDc</div><div class="whitespace-nowrap">Cita desta...</div></div>
            <div class="w-[72px] flex flex-col items-center overflow-hidden"><div class="h-[42px] w-[60px] overflow-hidden whitespace-nowrap text-[12px] leading-[42px] text-[#555] font-['Liberation_Sans',sans-serif] [font-variant:small-caps]">AaBbCcDc</div><div class="whitespace-nowrap">Referencia...</div></div>
            <div class="w-[72px] flex flex-col items-center overflow-hidden"><div class="h-[42px] w-[60px] overflow-hidden whitespace-nowrap text-[12px] leading-[42px] text-[#5b9bd5] font-['Liberation_Sans',sans-serif] [font-variant:small-caps]">AaBbCcDc</div><div class="whitespace-nowrap">Referencia...</div></div>
            <div class="w-[72px] flex flex-col items-center overflow-hidden"><div class="h-[42px] w-[60px] overflow-hidden whitespace-nowrap text-[12px] leading-[42px] text-black font-['Liberation_Sans',sans-serif] italic font-bold">AaBbCcDc</div><div class="whitespace-nowrap">Título del...</div></div>
            <div class="w-[14px] -my-[2px] ml-auto -mr-[15px] flex flex-col border-l border-[#c6c6c6] bg-[#f0f0f0]">
              <div class="h-[27px] bg-[#e0e0e0] flex items-center justify-center"><svg class="w-[8px] h-[8px] rotate-180"><use href="#caret"/></svg></div>
              <div class="h-[20px] border-y border-[#c6c6c6] flex items-center justify-center"><svg class="w-[8px] h-[8px]"><use href="#caret"/></svg></div>
              <div class="h-[19px] flex items-center justify-center"><svg class="w-[8px] h-[8px]"><use href="#caret"/></svg></div>
            </div>
          </div>
        </div>
        <div class="flex-1 text-center pr-[5px] text-[#555]">Estilos</div>
        <svg class="absolute right-[3px] bottom-[4px] w-[9px] h-[9px]"><use href="#launch"/></svg>
      </div>
      <!-- Edición -->
      <div class="w-[106px] border-r border-[#dcdcdc] flex flex-col">
        <div class="h-[74px] pl-[4px] pt-[7px] flex flex-col gap-[8px]">
          <div class="h-[15px] flex items-center"><svg class="w-[16px] h-[16px]" viewBox="0 0 16 16" fill="none" stroke="#2b579a" stroke-width="2"><circle cx="10" cy="6" r="4"/><path d="M7 9l-6 6"/></svg><span class="ml-[3px]">Buscar</span><svg class="ml-[6px] w-[7px] h-[7px]"><use href="#caret"/></svg></div>
          <div class="h-[15px] flex items-center"><svg class="w-[16px] h-[18px]" viewBox="0 0 16 18"><text x="2" y="8" font-size="10" font-weight="700" fill="#2b579a" font-family="Liberation Sans">ab</text><text x="3" y="17" font-size="10" font-weight="700" fill="#2b579a" font-family="Liberation Sans">ac</text></svg><span class="ml-[3px]">Reemplazar</span></div>
          <div class="h-[15px] flex items-center"><svg class="w-[16px] h-[18px]" viewBox="0 0 16 18"><path d="M4 1l9 9H8l3 7-2 1-3-7-3 3z" fill="#fff" stroke="#666"/></svg><span class="ml-[3px]">Seleccionar</span><svg class="w-[7px] h-[7px]"><use href="#caret"/></svg></div>
        </div>
        <div class="flex-1 text-center text-[#555]">Edición</div>
      </div>
      <div class="flex-1 flex items-end justify-center pb-[9px] pr-[8px]"><svg class="w-[9px] h-[7px]" viewBox="0 0 9 7"><path d="M1 5.500l3.500-4 3.500 4" fill="none" stroke="#555" stroke-width="1.300"/></svg></div>
    </div>

    <!-- body -->
    <div class="flex-1 flex min-h-0">
      <div class="w-[270px] border-r-2 border-[#c8c8c8] mt-[2px] pl-[14px] text-[12px] text-[#444] leading-[16px]">
        <div class="h-[26px] mt-[11px] flex items-center"><span class="text-[21px] font-light text-[#2b579a]">Navegación</span><svg class="ml-auto mr-[3px] w-[10px] h-[10px]"><use href="#caret"/></svg><svg class="ml-[5px] mr-[11px] w-[10px] h-[10px]" viewBox="0 0 10 10"><path d="M1 1l8 8M9 1L1 9" stroke="#666" stroke-width="2"/></svg></div>
        <div class="mt-[8px] w-[237px] h-[24px] bg-white border border-[#ababab] flex items-center pl-[3px] pr-[5px] text-[13px] text-[#555]">Buscar en documento<svg class="ml-auto w-[15px] h-[15px]" viewBox="0 0 16 16" fill="none" stroke="#2b579a" stroke-width="2"><circle cx="10" cy="6" r="4"/><path d="M7 9l-6 6"/></svg><svg class="ml-[3px] w-[7px] h-[7px]"><use href="#caret"/></svg></div>
        <div class="mt-[17px] flex items-center h-[16px] text-[13px]"><b class="text-[#2b579a] w-[49px]">Títulos</b><span class="w-px h-[18px] bg-[#d8d8d8]"></span><span class="ml-[13px] w-[52px]">Páginas</span><span class="w-px h-[18px] bg-[#d8d8d8]"></span><span class="ml-[14px]">Resultados</span></div>
        <p class="mt-[33px]">Cree un esquema interactivo de su<br />documento.</p>
        <p class="mt-[16px]">Es una buena manera de saber dónde se<br />encuentra o moverse rápidamente por el<br />contenido.</p>
        <p class="mt-[16px]">Para comenzar, vaya a la pestaña Inicio y<br />aplique estilos de encabezado a los<br />encabezados de su documento.</p>
      </div>
      <div class="flex-1 pl-[408px] overflow-hidden">
        <!-- document page -->
        <div class="w-[815px] h-[867px] bg-white font-['Liberation_Sans',sans-serif] text-[16px] leading-[18.500px] text-black overflow-hidden">
          <svg class="block w-[815px] h-[62px]" viewBox="0 0 815 62">
            <defs><linearGradient id="sw" x1="0" x2="1"><stop offset="0" stop-color="#fff"/><stop offset=".35" stop-color="#bbb"/><stop offset=".6" stop-color="#8a8a8a"/><stop offset=".85" stop-color="#ddd"/><stop offset="1" stop-color="#fff"/></linearGradient></defs>
            <path d="M130 62c120 0 300-32 620-32 10 0-120 32-100 32z" fill="url(#sw)"/>
            <path d="M270 0l25 0 17 17-45 28-40 0z" fill="#c8c8c8"/>
            <text x="145" y="5" font-size="20" fill="#777" font-family="Open Sans">CONSEJO de</text>
            <text x="123" y="35" font-size="25" fill="#777" font-family="Open Sans" textLength="142">DIRECTORES</text>
            <path d="M296 33h102v15H296z" fill="#ededed"/>
            <text x="346" y="30" text-anchor="middle" font-size="44" font-weight="700" fill="#fff" stroke="#bbb" font-family="Liberation Sans">TSE</text>
            <text x="298" y="41" font-size="8" fill="#555" font-family="Open Sans" textLength="100">Tribunal Supremo de Elecciones</text>
            <rect x="297" y="43" width="100" height="5" fill="#999"/>
            <text x="415" y="30" font-size="23" fill="#777" font-family="Open Sans" textLength="287">DOCUMENTO DE AGENDA</text>
            <path d="M400 36h320" stroke="#ccc"/>
          </svg>
          <div class="pl-[76px] w-[740px]">
            <div class="mt-[17px] text-right font-bold text-[#666] pr-[0px]">N.º 400-2020</div>
            <div class="mt-[19.750px] [text-align-last:justify]">
              <div class="pl-[47px]"><b>Referencia:</b> Del señor Esteban Salazar León, Coordinador de la Comisión de Ética y</div>
              <div>Valores del TSE, se conoce oficio CEV-005-2020 del 22 de enero de 2020, recibido el mismo</div>
              <div class="[text-align-last:left]">día en la Coordinación de este Consejo, el cual literalmente manifiesta:</div>
              <div class="pl-[47px] italic">“En virtud, de los cambios de representantes en la Comisión de Ética y Valores</div>
              <div class="italic">institucional y de conformidad, con el acuerdo del Superior, en el artículo sétimo de la sesión</div>
              <div class="italic">ordinaria n° 107-2019, de 12 de noviembre de 2019, comunicado en el oficio STSE-2676-</div>
              <div class="italic">2019 de misma fecha, relativo al artículo 11 del Reglamento de Funcionamiento de la</div>
              <div class="italic">precitada comisión, se solicita la colaboración, a efectos de, que se designe una fecha para</div>
              <div class="italic [text-align-last:left]">que se realice la juramentación a los integrantes que se detallan:</div>
              <div class="pl-[47px] italic [text-align-last:left] flex items-center"><span class="w-[8px] h-[13px] border border-[#444] mr-[8px]"></span>Evelyn Téllez Cuadra (STSE)</div>
              <div class="pl-[47px] italic [text-align-last:left] flex items-center"><span class="w-[8px] h-[13px] border border-[#444] mr-[8px]"></span>Laura Téllez Romero (DGRC)</div>
              <div class="pl-[47px] italic [text-align-last:left] flex items-center"><span class="w-[8px] h-[13px] border border-[#444] mr-[8px]"></span>Arlyn Barquero Rojas (DGRC)</div>
              <div class="pl-[47px] italic [text-align-last:left] flex items-center"><span class="w-[8px] h-[13px] border border-[#444] mr-[8px]"></span>Wendy Calderón Mora (DGET)</div>
              <div class="pl-[47px] italic">Asimismo, se hace de conocimiento de ese cuerpo colegiado, que la coordinación de</div>
              <div class="italic">la Comisión recae en los representantes de la DGRE, y el puesto de secretario, en los</div>
              <div class="italic [text-align-last:left]">designados por la Dirección Ejecutiva. El detalle de las personas integrantes es el siguiente:</div>
              <div class="mt-[11px] pl-[47px] italic text-[10px] [text-align-last:left]">”</div>
              <div class="mt-[4px] pl-[47px]"><b>Se dispone:</b> Informe el Departamento Legal, cual es la instancia administrativa</div>
              <div class="[text-align-last:left]">competente para instaurar el procedimiento que interesa. <b>ACUERDO FIRME.</b></div>
            </div>
            <div class="mt-[18px] w-[659px] h-[1px] bg-black"></div>
            <div class="mt-[17px] w-[659px] h-[1px] bg-black"></div>
            <div class="mt-[17px] w-[659px] h-[1px] bg-black"></div>
            <div class="mt-[57px] flex font-bold"><span class="w-[399px]">Héctor Enrique Fernández Masis</span><span>Erick Adrián Guzmán Vargas</span></div>
            <div class="mt-[72.500px] flex font-bold"><span class="w-[393px]"><span>Luis Antonio Bolaños </span><span class="underline decoration-wavy decoration-[#e00] decoration-1">Bolaños</span></span><span>Carlos Alberto Murillo Montoya</span></div>
            <div class="mt-[73.500px] flex font-bold"><span class="w-[394px]">Hugo Picado León</span><span>Dennis Cascante Hernández</span></div>
            <div class="mt-[17.750px] -ml-[8px] w-[670px] border border-black">
              <div class="h-[19px] pl-[7px] border-b border-black">ASUNTOS DE CONTRATACIÓN ADMINISTRATIVA</div>
              <div class="h-[18px] pl-[7px]">Observaciones:</div>
            </div>
          </div>
        </div>
      </div>
    </div>
    <div class="h-[22px] bg-[#f0f0f0] border-t border-[#d0d0d0] flex items-center pl-[8px] text-[12px] text-[#555]">
      <span>Página 1 de 1</span><span class="ml-[16px]">233 palabras</span>
      <div class="ml-auto mr-[20px] flex items-center gap-[14px]">
        <svg class="w-[14px] h-[14px]" viewBox="0 0 14 14" fill="none" stroke="#666"><path d="M1 2h5l1 1 1-1h5v10H8l-1 1-1-1H1zM7 3v10"/></svg>
        <svg class="w-[14px] h-[14px]" viewBox="0 0 14 14" fill="none" stroke="#666"><path d="M1 1h12v12H1z" fill="#c6c6c6"/><path d="M3 4h8M3 7h8M3 10h8"/></svg>
        <svg class="w-[14px] h-[14px]" viewBox="0 0 14 14" fill="none" stroke="#666"><path d="M1 2h12v10H1zM3 5h8"/></svg>
        <span class="ml-[8px] text-[14px]">−</span>
        <div class="w-[100px] h-px bg-[#888] flex justify-center items-center"><span class="w-[3px] h-[11px] bg-[#666]"></span></div>
        <span class="text-[14px]">+</span>
        <span class="w-[36px] text-right">120 %</span>
      </div>
    </div>
  </div>
</div>

<!-- TASKBAR -->
<div class="h-[40px] flex bg-black text-white text-[14px]">
  <div class="w-[1920px] flex relative">
    <div class="w-[48px] flex items-center justify-center"><svg class="w-[18px] h-[18px]"><use href="#win"/></svg></div>
    <div class="w-[48px] flex items-center justify-center"><svg class="w-[18px] h-[18px]"><use href="#find"/></svg></div>
    <div class="w-[48px] flex items-center justify-center"><svg class="w-[22px] h-[20px]"><use href="#taskview"/></svg></div>
    <div class="ml-[4px] w-[48px] flex items-center justify-center"><svg class="w-[22px] h-[24px]"><use href="#edge"/></svg></div>
    <div class="w-[48px] flex items-center justify-center"><svg class="w-[22px] h-[30px]"><use href="#store"/></svg></div>
    <div class="w-[49px] flex items-center justify-center border-b-[3px] border-[#76b9ed]"><svg class="w-[24px] h-[26px]"><use href="#outlook"/></svg></div>
    <div class="w-[49px] flex items-center justify-center border-b-[3px] border-[#76b9ed]"><svg class="w-[27px] h-[30px]"><use href="#skype"/></svg></div>
    <div class="w-[48px] flex items-center justify-center border-b-[3px] border-[#76b9ed]"><svg class="w-[24px] h-[26px]"><use href="#word"/></svg></div>
    <div class="w-[48px] flex items-center justify-center bg-[#333] border-b-[3px] border-[#76b9ed]"><svg class="w-[18px] h-[25px]"><use href="#photo"/></svg></div>
    <div class="w-[49px] flex items-center justify-center border-b-[3px] border-[#76b9ed]"><svg class="w-[24px] h-[26px]"><use href="#excel"/></svg></div>
    <div class="w-[50px] flex items-center justify-center border-b-[3px] border-[#76b9ed]"><svg class="w-[22px] h-[26px]"><use href="#folder"/></svg></div>
    <div class="ml-auto flex items-center">
      <svg class="w-[13px] h-[8px]" viewBox="0 0 13 8"><path d="M1 7l5.500-6L12 7" fill="none" stroke="#fff" stroke-width="1.100"/></svg>
      <svg class="ml-[11px] w-[18px] h-[16px]"><use href="#netw"/></svg>
      <svg class="ml-[5px] w-[18px] h-[16px]"><use href="#vol"/></svg>
      <div class="ml-[10px] w-[70px] text-center text-[13px] leading-[18px]">17:01<br />27/1/2020</div>
      <svg class="ml-[15px] w-[18px] h-[16px]"><use href="#notif"/></svg>
      <div class="ml-[19px] w-px h-[40px] bg-[#666]"></div>
      <div class="w-[5px]"></div>
    </div>
  </div>
  <div class="w-[1920px] flex relative">
    <div class="w-[48px] flex items-center justify-center"><svg class="w-[18px] h-[18px]"><use href="#win"/></svg></div>
    <div class="w-[48px] flex items-center justify-center"><svg class="w-[18px] h-[18px]"><use href="#find"/></svg></div>
    <div class="w-[48px] flex items-center justify-center"><svg class="w-[22px] h-[20px]"><use href="#taskview"/></svg></div>
    <div class="ml-[4px] w-[48px] flex items-center justify-center"><svg class="w-[22px] h-[24px]"><use href="#edge"/></svg></div>
    <div class="w-[48px] flex items-center justify-center"><svg class="w-[22px] h-[30px]"><use href="#store"/></svg></div>
    <div class="w-[49px] flex items-center justify-center border-b-[3px] border-[#76b9ed]"><svg class="w-[24px] h-[26px]"><use href="#outlook"/></svg></div>
    <div class="w-[49px] flex items-center justify-center border-b-[3px] border-[#76b9ed]"><svg class="w-[27px] h-[30px]"><use href="#skype"/></svg></div>
    <div class="w-[48px] flex items-center justify-center bg-[#333] border-b-[3px] border-[#76b9ed]"><svg class="w-[24px] h-[26px]"><use href="#word"/></svg></div>
    <div class="w-[48px] flex items-center justify-center border-b-[3px] border-[#76b9ed]"><svg class="w-[18px] h-[25px]"><use href="#photo"/></svg></div>
    <div class="w-[49px] flex items-center justify-center border-b-[3px] border-[#76b9ed]"><svg class="w-[24px] h-[26px]"><use href="#excel"/></svg></div>
    <div class="w-[50px] flex items-center justify-center border-b-[3px] border-[#76b9ed]"><svg class="w-[22px] h-[26px]"><use href="#folder"/></svg></div>
    <div class="ml-auto flex items-center">
      <svg class="w-[13px] h-[8px]" viewBox="0 0 13 8"><path d="M1 7l5.500-6L12 7" fill="none" stroke="#fff" stroke-width="1.100"/></svg>
      <svg class="ml-[11px] w-[18px] h-[16px]"><use href="#netw"/></svg>
      <svg class="ml-[5px] w-[18px] h-[16px]"><use href="#vol"/></svg>
      <div class="ml-[10px] w-[70px] text-center text-[13px] leading-[18px]">17:01<br />27/1/2020</div>
      <svg class="ml-[15px] mr-[24px] w-[18px] h-[16px]"><use href="#notif"/></svg>
    </div>
  </div>
</div>
</body>
</html>
